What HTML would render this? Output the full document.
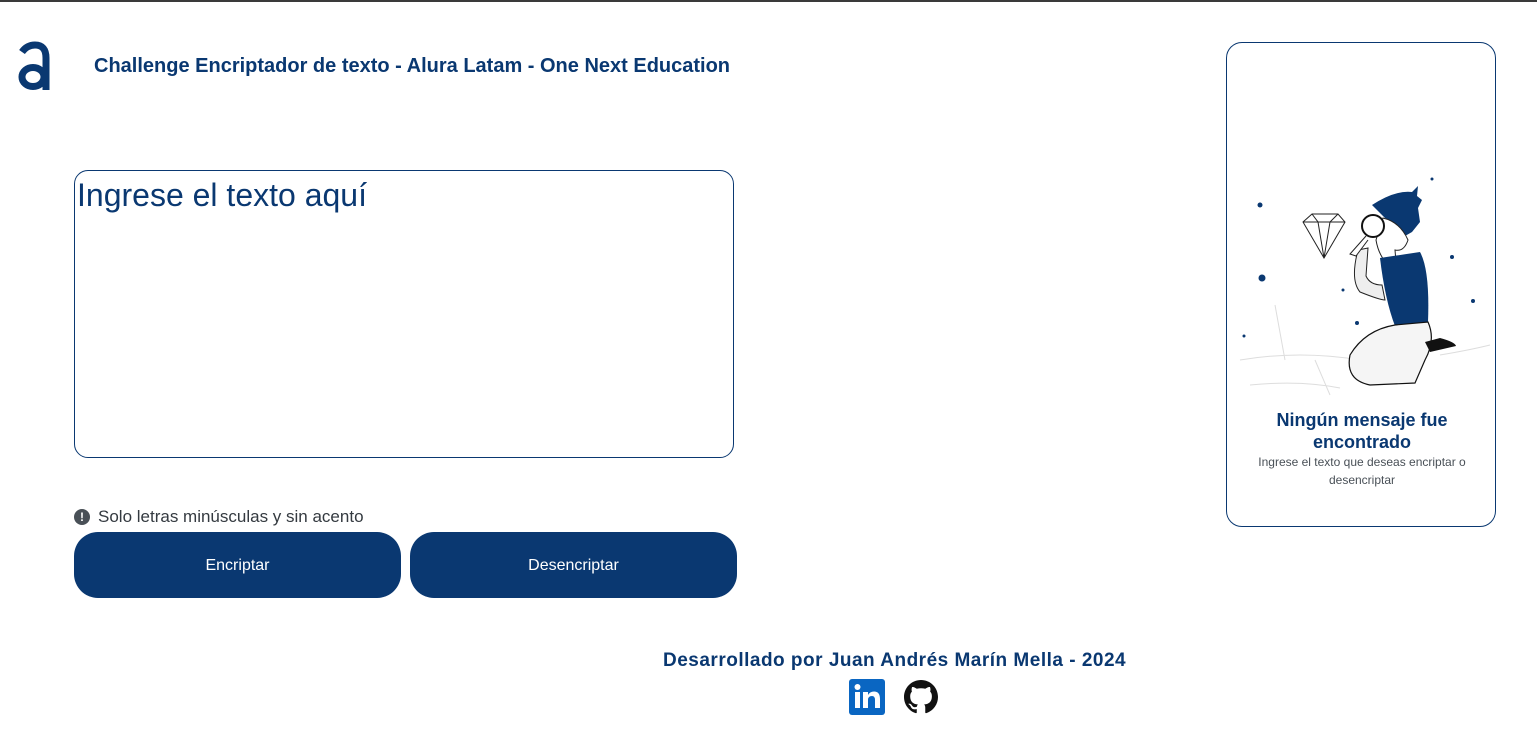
<!DOCTYPE html>
<html><head><meta charset="utf-8"><style>
body{margin:0;width:1537px;height:731px;background:#fff;font-family:"Liberation Sans",sans-serif;position:relative;overflow:hidden;color:#0a3871}
.topbar{position:absolute;left:0;top:0;width:1537px;height:2px;background:#3a3a3a}
.logo{position:absolute;left:16px;top:41px}
h1{position:absolute;left:94px;top:55px;margin:0;font-size:20px;font-weight:bold;color:#0a3871}
.ta{position:absolute;left:74px;top:170px;width:658px;height:286px;border:1px solid #0a3871;border-radius:14px}
.ta span{position:absolute;left:2px;top:6px;font-size:32px;color:#0a3871}
.warn{position:absolute;left:74px;top:507px;font-size:17px;color:#343a40;display:flex;align-items:center;gap:8px}
.warn i{width:16px;height:16px;border-radius:50%;background:#495057;color:#fff;font-size:12px;font-style:normal;font-weight:bold;text-align:center;line-height:16px}
.btn{position:absolute;top:532px;width:327px;height:66px;background:#0a3871;border-radius:24px;color:#fff;font-size:16px;text-align:center;line-height:68px}
.card{position:absolute;left:1226px;top:42px;width:268px;height:483px;border:1px solid #0a3871;border-radius:16px}
.ct{position:absolute;left:0;width:270px;text-align:center}
.foot{position:absolute;left:663px;top:650px;font-size:19px;font-weight:bold;letter-spacing:0.5px}
</style></head><body>
<div class="topbar"></div>
<svg class="logo" width="36" height="50" viewBox="0 0 36 50"><path d="M6 11 Q11 4 19 4 Q30 4 30 17 V49" fill="none" stroke="#0a3871" stroke-width="7"/><ellipse cx="17" cy="36" rx="11" ry="9.5" fill="none" stroke="#0a3871" stroke-width="7"/></svg>
<h1>Challenge Encriptador de texto - Alura Latam - One Next Education</h1>
<div class="ta"><span>Ingrese el texto aquí</span></div>
<div class="warn"><i>!</i>Solo letras minúsculas y sin acento</div>
<div class="btn" style="left:74px">Encriptar</div>
<div class="btn" style="left:410px">Desencriptar</div>
<div class="card">
<svg width="270" height="485" style="position:absolute;left:-1px;top:-1px" viewBox="1226 42 270 485">
<g fill="#0a3871"><circle cx="1260" cy="205" r="2.5"/><circle cx="1262" cy="278" r="3.5"/><circle cx="1244" cy="336" r="1.5"/><circle cx="1343" cy="290" r="1.5"/><circle cx="1357" cy="323" r="2"/><circle cx="1452" cy="257" r="2"/><circle cx="1473" cy="301" r="2"/><circle cx="1432" cy="179" r="1.5"/></g>
<g fill="none" stroke="#ddd" stroke-width="1"><path d="M1240 360 Q1300 350 1360 360 M1250 385 Q1300 380 1340 388 M1275 305 L1285 360 M1315 360 L1330 395 M1440 355 Q1470 350 1490 345"/></g>
<path d="M1303 222 L1312 214 L1338 214 L1345 222 L1324 258 Z M1303 222 H1345 M1312 214 L1318 222 L1324 258 L1330 222 L1338 214" fill="none" stroke="#222" stroke-width="1"/>
<path d="M1372 205 Q1395 190 1412 192 L1418 186 L1417 196 L1422 200 L1418 208 L1420 222 L1412 232 L1405 236 Q1395 222 1385 218 Z" fill="#0a3871"/>
<path d="M1383 218 Q1400 222 1408 240 Q1404 252 1395 250 L1396 262 L1384 260 Q1378 252 1376 240 Z" fill="#fff" stroke="#222" stroke-width="1"/>
<path d="M1380 258 L1420 252 Q1430 270 1428 322 L1395 326 Q1385 300 1380 258 Z" fill="#0a3871"/>
<path d="M1358 250 Q1350 280 1360 292 Q1380 300 1385 300 L1382 285 Q1370 285 1366 276 L1368 248 Z" fill="#eee" stroke="#222" stroke-width="1"/>
<path d="M1395 325 L1428 322 Q1436 340 1425 360 L1415 383 L1370 385 Q1345 380 1350 355 Q1365 330 1395 325 Z" fill="#f5f5f5" stroke="#111" stroke-width="1.2"/>
<path d="M1425 342 L1440 338 Q1455 342 1456 346 L1430 352 Z" fill="#111"/>
<circle cx="1373" cy="226" r="11" fill="#fff" stroke="#111" stroke-width="2"/>
<path d="M1366 236 L1350 254 L1356 256 L1368 240" fill="#fff" stroke="#222"/>
</svg>
<div class="ct" style="top:366px;font-size:18px;font-weight:bold;line-height:22px">Ningún mensaje fue<br>encontrado</div>
<div class="ct" style="top:410px;font-size:12px;color:#495057;line-height:18px">Ingrese el texto que deseas encriptar o<br>desencriptar</div>
</div>
<div class="foot">Desarrollado por Juan Andrés Marín Mella - 2024</div>
<svg style="position:absolute;left:849px;top:679px" width="36" height="36" viewBox="0 0 36 36"><rect width="36" height="36" rx="3" fill="#0a66c2"/><rect x="6" y="13" width="5" height="16" fill="#fff"/><circle cx="8.5" cy="8" r="3" fill="#fff"/><path d="M14 13 H19 V16 Q21 12.5 25 12.5 Q31 12.5 31 20 V29 H26 V21 Q26 17 23 17 Q19 17 19 21 V29 H14 Z" fill="#fff"/></svg>
<svg style="position:absolute;left:904px;top:680px" width="34" height="34" viewBox="0 0 16 16"><path fill="#111" d="M8 0C3.580 0 0 3.58 0 8c0 3.54 2.29 6.530 5.470 7.59.4.07.55-.17.55-.38 0-.19-.01-.82-.01-1.49-2.01.37-2.53-.49-2.69-.94-.09-.23-.48-.94-.82-1.130-.28-.15-.68-.52-.01-.53.63-.01 1.08.58 1.23.82.72 1.21 1.87.87 2.33.66.07-.52.28-.87.51-1.07-1.78-.2-3.64-.89-3.64-3.95 0-.87.31-1.59.82-2.15-.08-.2-.36-1.02.08-2.12 0 0 .67-.21 2.2.82.64-.18 1.32-.27 2-.27.68 0 1.36.09 2 .27 1.53-1.04 2.2-.82 2.2-.82.44 1.1.16 1.92.08 2.12.51.56.82 1.27.82 2.15 0 3.07-1.87 3.750-3.65 3.95.29.25.54.73.54 1.48 0 1.07-.01 1.93-.01 2.2 0 .21.15.46.55.38A8.013 8.013 0 0016 8c0-4.42-3.58-8-8-8z"/></svg>
</body></html>
